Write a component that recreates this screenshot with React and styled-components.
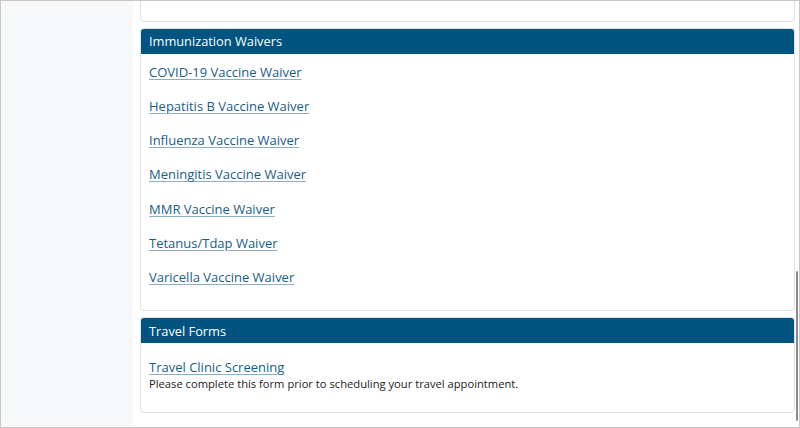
import React from "react";
import styled, { createGlobalStyle } from "styled-components";

const Global = createGlobalStyle`
  html, body { margin: 0; padding: 0; background: #ffffff; }
  body { font-family: "Open Sans", "Noto Sans", sans-serif; }
  * { box-sizing: border-box; }
`;

const Frame = styled.div`
  position: relative;
  width: 800px;
  height: 428px;
  border: 1px solid #c8c8c8;
  display: flex;
  overflow: hidden;
  background: #ffffff;
`;

const Sidebar = styled.aside`
  width: 132px;
  flex: none;
  background: #f7f8fa;
`;

const Main = styled.main`
  flex: 1;
  display: flex;
  flex-direction: column;
  justify-content: flex-end;
  gap: 6px;
  padding: 0 4px 14px 7px;
  overflow: hidden;
`;

const Card = styled.section`
  flex: none;
  border: 1px solid #dfe1e4;
  border-radius: 4px;
  background: #ffffff;
  overflow: hidden;
  min-height: ${(p) => p.$minHeight || 0}px;
`;

const CardHeader = styled.h2`
  margin: 0;
  height: 25px;
  padding: 0 8px;
  display: flex;
  align-items: center;
  background: #00547f;
  color: #ffffff;
  font-size: 12.8px;
  font-weight: 400;
`;

const CardBody = styled.div`
  padding: ${(p) => p.$pad};
  display: flex;
  flex-direction: column;
  align-items: flex-start;
  gap: ${(p) => p.$gap || 0}px;
`;

const LinkItem = styled.a`
  color: #175d89;
  font-size: 13px;
  line-height: 18px;
  text-decoration: underline;
  text-decoration-color: #8cafc5;
  text-underline-offset: 2px;
  cursor: pointer;
`;

const Note = styled.p`
  margin: 0;
  color: #222222;
  font-size: 11.2px;
  line-height: 16px;
`;

const ScrollThumb = styled.div`
  position: absolute;
  right: 1px;
  top: 270px;
  width: 2px;
  height: 150px;
  background: #8a8a8a;
  border-radius: 1px;
`;

const waivers = [
  "COVID-19 Vaccine Waiver",
  "Hepatitis B Vaccine Waiver",
  "Influenza Vaccine Waiver",
  "Meningitis Vaccine Waiver",
  "MMR Vaccine Waiver",
  "Tetanus/Tdap Waiver",
  "Varicella Vaccine Waiver",
];

export default function App() {
  return (
    <>
      <Global />
      <Frame>
        <Sidebar />
        <Main>
          <Card $minHeight={60} />
          <Card>
            <CardHeader>Immunization Waivers</CardHeader>
            <CardBody $gap={16.2} $pad="9px 8px 24px">
              {waivers.map((w) => (
                <LinkItem key={w}>{w}</LinkItem>
              ))}
            </CardBody>
          </Card>
          <Card>
            <CardHeader>Travel Forms</CardHeader>
            <CardBody $pad="15px 8px 20px">
              <LinkItem>Travel Clinic Screening</LinkItem>
              <Note>Please complete this form prior to scheduling your travel appointment.</Note>
            </CardBody>
          </Card>
        </Main>
        <ScrollThumb />
      </Frame>
    </>
  );
}
